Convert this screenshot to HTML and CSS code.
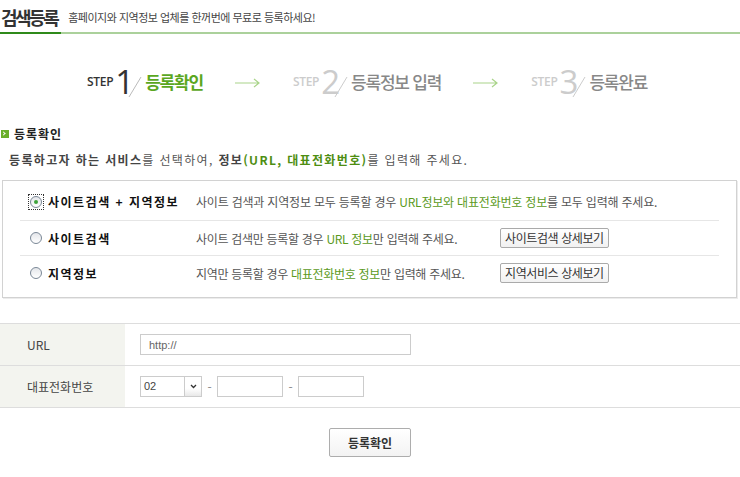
FILE: index.html
```html
<!DOCTYPE html>
<html lang="ko">
  <head>
    <meta charset="UTF-8" />
    <title>검색등록</title>
    <link rel="stylesheet" href="styles.css">
  </head>
  <body>
    <div class="page-head">
      <h1>검색등록</h1>
      <span class="page-desc">홈페이지와 지역정보 업체를 한꺼번에 무료로 등록하세요!</span>
    </div>

    <div class="steps">
      <div class="step on">
        <span class="step-word">STEP</span><span class="step-num">1</span>
        <svg class="step-slash" width="14" height="26" viewBox="0 0 14 26"><line x1="1" y1="25" x2="13" y2="5" stroke="#bbb" stroke-width="1"/></svg>
        <span class="step-name">등록확인</span>
      </div>
      <svg class="arrow" width="26" height="10" viewBox="0 0 26 10"><path d="M0 5H24M19 1L24 5L19 9" fill="none" stroke="#a9d48a" stroke-width="1.2"/></svg>
      <div class="step">
        <span class="step-word">STEP</span><span class="step-num">2</span>
        <svg class="step-slash" width="14" height="26" viewBox="0 0 14 26"><line x1="1" y1="25" x2="13" y2="5" stroke="#ccc" stroke-width="1"/></svg>
        <span class="step-name">등록정보 입력</span>
      </div>
      <svg class="arrow" width="26" height="10" viewBox="0 0 26 10"><path d="M0 5H24M19 1L24 5L19 9" fill="none" stroke="#a9d48a" stroke-width="1.2"/></svg>
      <div class="step">
        <span class="step-word">STEP</span><span class="step-num">3</span>
        <svg class="step-slash" width="14" height="26" viewBox="0 0 14 26"><line x1="1" y1="25" x2="13" y2="5" stroke="#ccc" stroke-width="1"/></svg>
        <span class="step-name">등록완료</span>
      </div>
    </div>

    <h2 class="sec-title"><span class="bullet"></span>등록확인</h2>
    <p class="sec-desc">
      <b>등록하고자 하는 서비스</b>를 선택하여, <b>정보</b><b class="green">(URL, 대표전화번호)</b>를 입력해 주세요.
    </p>

    <div class="choice-box">
      <div class="choice first">
        <span class="radio checked"></span>
        <span class="choice-label">사이트검색 + 지역정보</span>
        <span class="choice-desc">사이트 검색과 지역정보 모두 등록할 경우 <em>URL정보와 대표전화번호 정보</em>를 모두 입력해 주세요.</span>
      </div>
      <div class="choice">
        <span class="radio"></span>
        <span class="choice-label">사이트검색</span>
        <span class="choice-desc">사이트 검색만 등록할 경우 <em>URL 정보</em>만 입력해 주세요.</span>
        <button class="small-btn">사이트검색 상세보기</button>
      </div>
      <div class="choice">
        <span class="radio"></span>
        <span class="choice-label">지역정보</span>
        <span class="choice-desc">지역만 등록할 경우 <em>대표전화번호 정보</em>만 입력해 주세요.</span>
        <button class="small-btn">지역서비스 상세보기</button>
      </div>
    </div>

    <div class="form-table">
      <div class="form-row">
        <div class="form-label">URL</div>
        <div class="form-field">
          <input class="text url" type="text" value="http://">
        </div>
      </div>
      <div class="form-row">
        <div class="form-label">대표전화번호</div>
        <div class="form-field">
          <span class="select"><span class="select-val">02</span><span class="select-btn"><svg width="7" height="5" viewBox="0 0 7 5"><path d="M1 1L3.5 3.5L6 1" fill="none" stroke="#333" stroke-width="1.3"/></svg></span></span>
          <span class="dash">-</span>
          <input class="text tel" type="text">
          <span class="dash">-</span>
          <input class="text tel" type="text">
        </div>
      </div>
    </div>

    <div class="submit-wrap">
      <button class="submit-btn">등록확인</button>
    </div>
  </body>
</html>
```

FILE: styles.css
```css
body {
  margin: 0;
  font-family: "Noto Sans CJK KR", "Noto Sans", sans-serif;
  font-size: 12px;
  color: #555;
  background: #fff;
}
.page-head {
  display: flex;
  align-items: flex-end;
  height: 32px;
  border-bottom: 2px solid #abd19b;
  position: relative;
}
.page-head::after {
  content: "";
  position: absolute;
  left: 0;
  bottom: -2px;
  width: 61px;
  height: 2px;
  background: #2f8a1a;
}
h1 {
  margin: 0 0 4px 1px;
  font-size: 18px;
  font-weight: 700;
  letter-spacing: -2.5px;
  color: #333;
  line-height: 22px;
}
.page-desc {
  margin: 0 0 8px 11px;
  font-size: 11px;
  letter-spacing: -0.5px;
  color: #444;
  line-height: 14px;
}
.steps {
  display: flex;
  align-items: center;
  gap: 32px;
  padding-left: 87px;
  margin-top: 32px;
  height: 32px;
}
.step {
  display: flex;
  align-items: flex-end;
  color: #ccc;
}
.step-word {
  font-family: "Open Sans", sans-serif;
  font-size: 12px;
  font-weight: 600;
  letter-spacing: -0.3px;
  line-height: 14px;
  margin-bottom: 7px;
}
.step-num {
  font-family: "Open Sans", sans-serif;
  font-size: 33px;
  font-weight: 400;
  line-height: 28px;
  margin-left: 2px;
}
.step-slash {
  margin-left: -6px;
  margin-bottom: -2px;
}
.step-name {
  font-size: 17px;
  font-weight: 500;
  letter-spacing: -1.2px;
  color: #888;
  line-height: 20px;
  margin-left: 3px;
  margin-bottom: 4px;
}
.step.on .step-word,
.step.on .step-num {
  color: #333;
}
.step.on .step-name {
  color: #5ba71f;
  font-weight: 700;
}
.arrow {
  margin-top: 2px;
}
.sec-title {
  display: flex;
  align-items: center;
  margin: 28px 0 0 1px;
  font-size: 12px;
  font-weight: 700;
  color: #222;
  line-height: 16px;
  letter-spacing: 1px;
}
.bullet {
  width: 8px;
  height: 8px;
  background: #6aae2a;
  margin-right: 5px;
  position: relative;
}
.bullet::after {
  content: "";
  position: absolute;
  left: 1px;
  top: 2px;
  width: 2px;
  height: 2px;
  border-right: 1px solid #fff;
  border-top: 1px solid #fff;
  transform: rotate(45deg);
}
.sec-desc {
  margin: 10px 0 0 9px;
  line-height: 16px;
  color: #555;
  letter-spacing: 1.35px;
}
.sec-desc b {
  color: #444;
}
.sec-desc .green {
  color: #4e8e12;
}
.choice-box {
  margin: 12px 3px 0 2px;
  border: 1px solid #d2d2d2;
  box-shadow: 1px 1px 0 #ececec;
  padding: 2px 17px 7px;
}
.choice {
  display: flex;
  align-items: center;
  height: 34px;
  padding-left: 10px;
  border-top: 1px solid #e6e6e6;
}
.choice.first {
  height: 37px;
  border-top: none;
}
.radio {
  width: 10px;
  height: 10px;
  border: 1px solid #7a8796;
  border-radius: 50%;
  background: linear-gradient(#e4e6ea, #fff);
  margin-right: 6px;
  position: relative;
  flex: none;
}
.radio.checked::before {
  content: "";
  position: absolute;
  left: 3px;
  top: 3px;
  width: 4px;
  height: 4px;
  border-radius: 50%;
  background: #3fa43c;
}
.radio.checked::after {
  content: "";
  position: absolute;
  left: -3px;
  top: -3px;
  width: 14px;
  height: 14px;
  border: 1px dotted #333;
}
.choice-label {
  width: 148px;
  flex: none;
  font-weight: 700;
  color: #111;
  letter-spacing: 1.5px;
}
.choice-desc {
  width: 304px;
  flex: none;
  white-space: nowrap;
  color: #555;
  letter-spacing: -0.3px;
}
.choice.first .choice-desc {
  width: auto;
  letter-spacing: -0.2px;
}
.choice-desc em {
  font-style: normal;
  color: #5b9a1c;
}
.small-btn {
  height: 20px;
  padding: 0 4px;
  font-family: inherit;
  font-size: 12px;
  letter-spacing: -0.4px;
  color: #333;
  background: linear-gradient(#fff, #f1f1f1);
  border: 1px solid #aaa;
  border-radius: 2px;
  line-height: 18px;
}
.form-table {
  margin-top: 25px;
  border-top: 1px solid #ddd;
  border-bottom: 1px solid #ddd;
}
.form-row {
  display: flex;
  height: 41px;
}
.form-row + .form-row {
  border-top: 1px solid #ddd;
}
.form-label {
  width: 98px;
  padding-left: 27px;
  background: #f3f4ef;
  display: flex;
  align-items: center;
  color: #444;
}
.form-field {
  display: flex;
  align-items: center;
  padding-left: 15px;
}
.text {
  box-sizing: border-box;
  height: 21px;
  border: 1px solid #ccc;
  padding: 0 8px;
  font-family: "Liberation Sans", sans-serif;
  font-size: 11px;
  color: #666;
  outline: none;
}
.url {
  width: 271px;
}
.tel {
  width: 66px;
}
.select {
  box-sizing: border-box;
  display: flex;
  width: 62px;
  height: 21px;
  border: 1px solid #ccc;
}
.select-val {
  flex: 1;
  padding-left: 3px;
  font-family: "Liberation Sans", sans-serif;
  font-size: 11px;
  color: #444;
  line-height: 19px;
}
.select-btn {
  width: 16px;
  border-left: 1px solid #ccc;
  display: flex;
  align-items: center;
  justify-content: center;
  background: linear-gradient(#fff 60%, #e8e8e8);
}
.dash {
  width: 15px;
  text-align: center;
  color: #888;
}
.submit-wrap {
  display: flex;
  justify-content: center;
  margin-top: 20px;
}
.submit-btn {
  width: 82px;
  height: 29px;
  font-family: inherit;
  font-size: 12px;
  font-weight: 700;
  color: #333;
  background: linear-gradient(#fff, #f3f3f3);
  border: 1px solid #adadad;
  border-radius: 2px;
}
```
